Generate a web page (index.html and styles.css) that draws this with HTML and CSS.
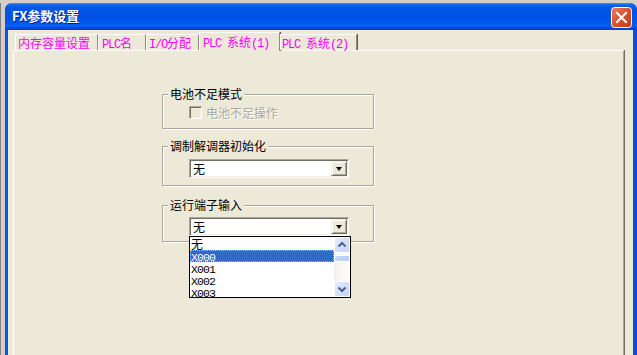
FILE: index.html
```html
<!DOCTYPE html>
<html lang="zh-CN">
<head>
    <meta charset="UTF-8" />
    <title>FX参数设置</title>
    <link rel="stylesheet" href="styles.css">
</head>
<body>
    <div class="desk">
        <div class="window">
            <div class="titlebar">
                <span class="title">FX参数设置</span>
                <span class="close">
                    <svg width="21" height="21" viewBox="0 0 21 21">
                        <defs>
                            <linearGradient id="cg" x1="0" y1="0" x2="1" y2="1">
                                <stop offset="0" stop-color="#e8805c" />
                                <stop offset="0.5" stop-color="#d9512b" />
                                <stop offset="1" stop-color="#c13a14" />
                            </linearGradient>
                        </defs>
                        <rect x="0.5" y="0.5" width="20" height="20" rx="3" fill="url(#cg)" stroke="#ffffff" />
                        <path d="M6 6 L15 15 M15 6 L6 15" stroke="#ffffff" stroke-width="2" stroke-linecap="square" />
                    </svg>
                </span>
            </div>
            <div class="frame">
                <div class="client">
                    <div class="tabs">
                        <div class="tab tab-mem">内存容量设置</div>
                        <div class="tab tab-name"><span class="lat">PLC</span>名</div>
                        <div class="tab tab-io"><span class="lat">I/O</span>分配</div>
                        <div class="tab tab-sys1 active"><span class="lat">PLC </span>系统<span class="lat">(1)</span></div>
                        <div class="tab tab-sys2"><span class="lat">PLC </span>系统<span class="lat">(2)</span></div>
                    </div>
                    <div class="panel">
                        <fieldset class="group group-battery">
                            <legend>电池不足模式</legend>
                            <label class="check disabled"><span class="box"></span>电池不足操作</label>
                        </fieldset>
                        <fieldset class="group group-modem">
                            <legend>调制解调器初始化</legend>
                            <div class="combo">
                                <span class="value">无</span>
                                <span class="drop"><span class="tri"></span></span>
                            </div>
                        </fieldset>
                        <fieldset class="group group-run">
                            <legend>运行端子输入</legend>
                            <div class="combo">
                                <span class="value">无</span>
                                <span class="drop"><span class="tri"></span></span>
                                <div class="list">
                                    <ul class="items">
                                        <li>无</li>
                                        <li class="selected"><span class="lat">X000</span></li>
                                        <li><span class="lat">X001</span></li>
                                        <li><span class="lat">X002</span></li>
                                        <li><span class="lat">X003</span></li>
                                    </ul>
                                    <div class="scrollbar">
                                        <span class="sbtn">
                                            <svg width="14" height="14" viewBox="0 0 14 14"><polyline points="3.5,8.5 7,5 10.5,8.5" fill="none" stroke="#4d6185" stroke-width="2" /></svg>
                                        </span>
                                        <span class="thumb"></span>
                                        <span class="track"></span>
                                        <span class="sbtn">
                                            <svg width="14" height="14" viewBox="0 0 14 14"><polyline points="3.5,5.5 7,9 10.5,5.5" fill="none" stroke="#4d6185" stroke-width="2" /></svg>
                                        </span>
                                    </div>
                                </div>
                            </div>
                        </fieldset>
                    </div>
                </div>
            </div>
        </div>
    </div>
</body>
</html>
```

FILE: styles.css
```css
* {
    margin: 0;
    padding: 0;
    box-sizing: border-box;
}

body {
    width: 637px;
    height: 355px;
    overflow: hidden;
    background: #d4d0c8;
    font-family: "Noto Sans CJK SC", "Liberation Sans", sans-serif;
    font-size: 12px;
    line-height: 12px;
    color: #000;
}

.desk {
    height: 355px;
    padding: 3px 0 0 5px;
    background:
        linear-gradient(#d4d0c8 0, #d4d0c8 3px, transparent 3px),
        linear-gradient(90deg, #808080 0, #808080 1px, #d4d0c8 1px, #d4d0c8 5px);
}

.window {
    width: 632px;
    height: 352px;
    display: flex;
    flex-direction: column;
    border-radius: 7px 7px 0 0;
    overflow: hidden;
    background: #0842d8;
}

/* title bar */

.titlebar {
    height: 27px;
    flex: none;
    display: flex;
    align-items: center;
    justify-content: space-between;
    padding: 0 5px 0 7px;
    background: linear-gradient(#3d8ff8 0, #0a62ee 2px, #0255e5 6px, #0052e4 14px, #0158eb 20px, #0563f0 23px, #0149dd 25px, #003ec8 27px);
}

.title {
    color: #fff;
    font-weight: bold;
    font-size: 13px;
    line-height: 13px;
    margin-top: -2px;
    text-shadow: 1px 1px 0 #0a1e8a;
}

.close {
    display: flex;
    margin-top: 1px;
}

/* window body */

.frame {
    flex: 1;
    display: flex;
    padding: 0 4px 0 3px;
    background: linear-gradient(90deg, #0733c8 0, #1660f0 1px, #0a4ce0 3px);
}

.client {
    flex: 1;
    display: flex;
    flex-direction: column;
    padding: 2px 9px 0 5px;
    background: #ece9d8;
}

/* tabs */

.tabs {
    display: flex;
    align-items: flex-end;
    height: 18px;
    margin-left: 2px;
    position: relative;
    z-index: 1;
}

.tab {
    height: 16px;
    padding: 2px 0 0 2px;
    border-top: 1px solid #fff;
    border-left: 1px solid #fff;
    border-right: 1px solid #8d8a80;
    box-shadow: 1px 0 0 #5e5c55;
    color: #ff00ff;
    white-space: nowrap;
    background: #ece9d8;
}

.tab-mem { width: 83px; }
.tab-name { width: 48px; padding-left: 3px; }
.tab-io { width: 53px; }
.tab-sys1 { width: 81px; padding-left: 3px; }
.tab-sys2 { width: 77px; padding-left: 1px; }

.tab.active {
    height: 19px;
    padding-top: 3px;
    margin-bottom: -1px;
}

.lat {
    font-family: "Liberation Mono", monospace;
    letter-spacing: -1.2px;
}

/* page */

.panel {
    flex: 1;
    border-top: 1px solid #fff;
    border-left: 1px solid #fff;
    border-right: 1px solid #aca899;
    box-shadow: 1px 0 0 #716f64;
    padding: 37px 0 0 148px;
}

.group {
    width: 212px;
    border: 1px solid #aca899;
    box-shadow: inset 1px 1px 0 #fff, 1px 1px 0 #fff;
}

.group legend {
    margin-left: 5px;
    padding: 0 2px;
    background: #ece9d8;
    line-height: 12px;
}

.group > .check,
.group > .combo {
    margin-left: 26px;
}

.group-battery {
    padding: 6px 0 9px;
}

.group-modem {
    margin-top: 11px;
    padding: 7px 0 7px;
}

.group-run {
    margin-top: 13px;
    padding: 6px 0 5px;
}

/* checkbox */

.check {
    display: flex;
    align-items: center;
    gap: 4px;
    height: 13px;
}

.check .box {
    width: 13px;
    height: 13px;
    border: 1px solid;
    border-color: #aca899 #fff #fff #aca899;
    box-shadow: inset 1px 1px 0 #716f64, inset -1px -1px 0 #f1efe2;
}

.check.disabled {
    color: #aca899;
    text-shadow: 1px 1px 0 #fff;
}

/* combo box */

.combo {
    position: relative;
    width: 160px;
    height: 19px;
    display: flex;
    align-items: center;
    justify-content: space-between;
    background: #fff;
    border: 1px solid;
    border-color: #aca899 #fff #fff #aca899;
    box-shadow: inset 1px 1px 0 #716f64, inset -1px -1px 0 #f1efe2;
    padding: 1px 1px 1px 3px;
}

.drop {
    width: 16px;
    height: 15px;
    display: flex;
    align-items: center;
    justify-content: center;
    background: #ece9d8;
    border: 1px solid;
    border-color: #f1efe2 #716f64 #716f64 #f1efe2;
    box-shadow: inset 1px 1px 0 #fff, inset -1px -1px 0 #aca899;
}

.tri {
    width: 0;
    height: 0;
    border-left: 3.5px solid transparent;
    border-right: 3.5px solid transparent;
    border-top: 4px solid #000;
    margin-top: 1px;
}

/* dropped list */

.list {
    position: absolute;
    top: 18px;
    left: -1px;
    width: 162px;
    height: 62px;
    display: flex;
    background: #fff;
    border: 1px solid #000;
    z-index: 2;
}

.items {
    flex: 1;
    list-style: none;
    padding-top: 1px;
}

.items li {
    height: 12px;
    line-height: 12px;
    padding-left: 1px;
}

.items li .lat {
    font-size: 11.5px;
    letter-spacing: -0.9px;
}

.items li.selected {
    background: #316ac5;
    color: #fff;
    outline: 1px dotted #e8b85a;
    outline-offset: -1px;
}

.scrollbar {
    width: 16px;
    display: flex;
    flex-direction: column;
    background: linear-gradient(90deg, #f3f1ec, #fefefb);
}

.sbtn {
    height: 16px;
    display: flex;
    align-items: center;
    justify-content: center;
    background: linear-gradient(135deg, #e4ecfd, #c1d3fb);
    border: 1px solid #fff;
    border-radius: 2px;
}

.thumb {
    height: 7px;
    margin-top: 2px;
    background: linear-gradient(90deg, #c9d8fc, #b6cbf9);
    border: 1px solid #fff;
    border-radius: 2px;
}

.track {
    flex: 1;
}
```
